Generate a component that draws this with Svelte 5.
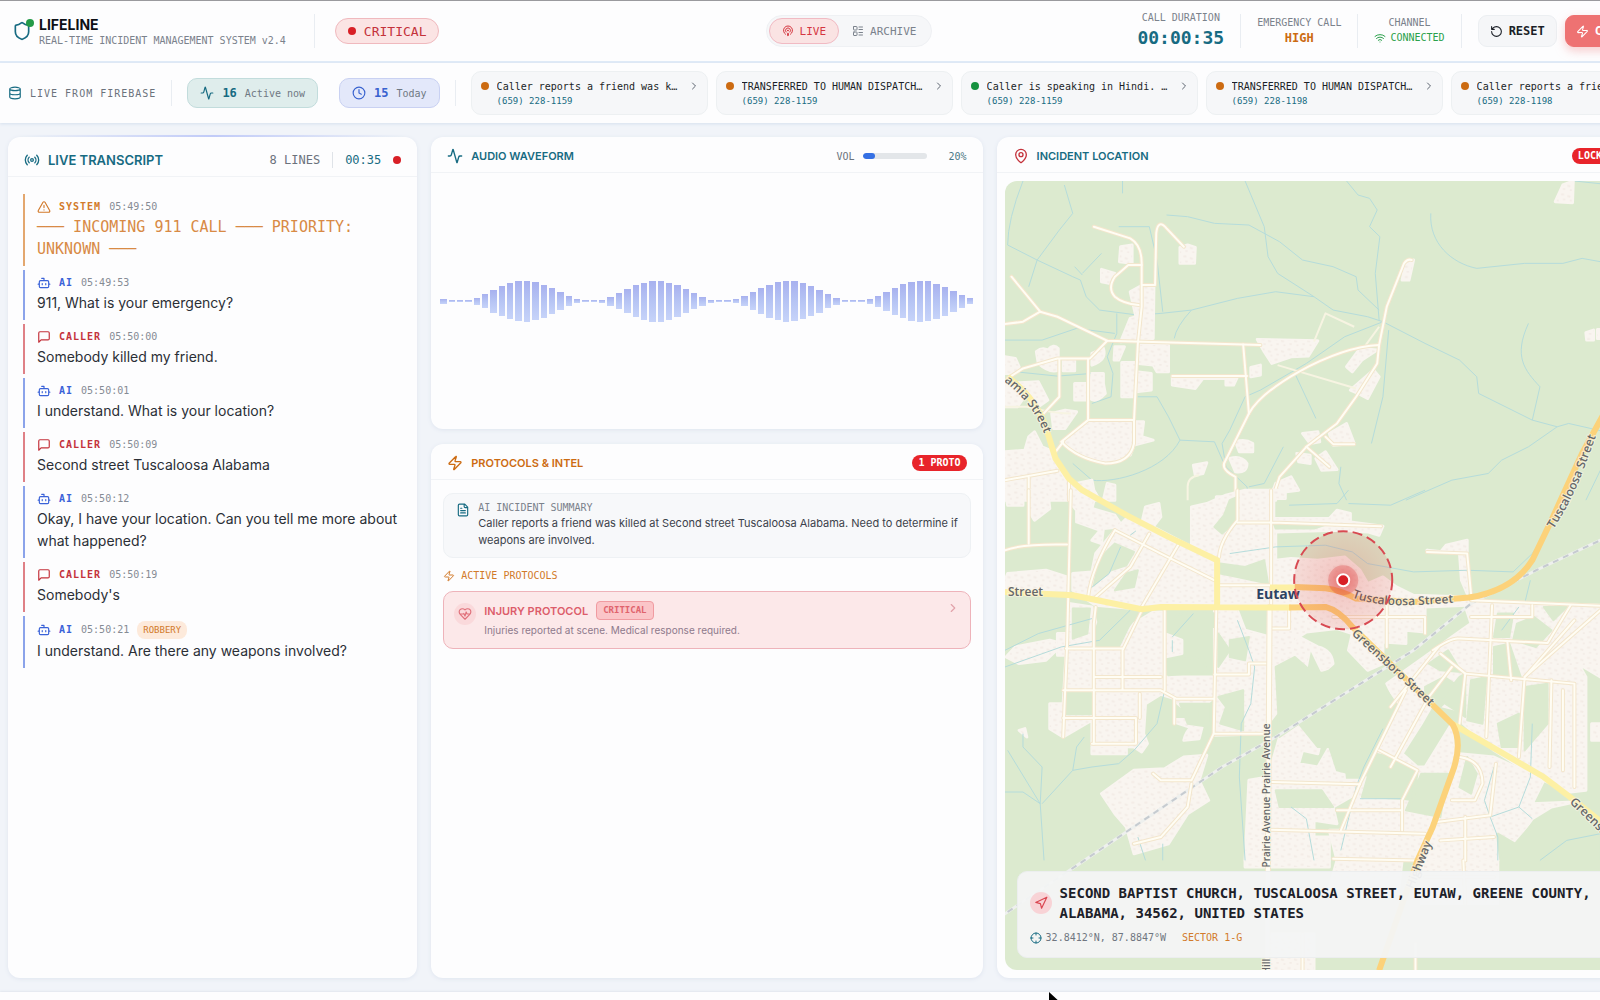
<script lang="ts">
  type Speaker = 'system' | 'ai' | 'caller';

  interface Line {
    speaker: Speaker;
    time: string;
    text: string;
    tag?: string;
  }

  const icons: Record<string, string> = {
    shield:
      'M20 13c0 5-3.5 7.5-7.66 8.95a1 1 0 0 1-.67-.01C7.5 20.5 4 18 4 13V6a1 1 0 0 1 1-1c2 0 4.5-1.2 6.24-2.72a1.17 1.17 0 0 1 1.52 0C14.51 3.81 17 5 19 5a1 1 0 0 1 1 1z',
    database:
      'M3 5a9 3 0 1 0 18 0a9 3 0 1 0-18 0M3 5v14a9 3 0 0 0 18 0V5M3 12a9 3 0 0 0 18 0',
    activity:
      'M22 12h-2.48a2 2 0 0 0-1.93 1.46l-2.35 8.36a.25.25 0 0 1-.48 0L9.24 2.18a.25.25 0 0 0-.48 0l-2.35 8.36A2 2 0 0 1 4.49 12H2',
    clock: 'M2 12a10 10 0 1 0 20 0a10 10 0 1 0-20 0M12 6v6l4 2',
    podcast:
      'M16.85 18.58a9 9 0 1 0-9.7 0M8 14a5 5 0 1 1 8 0M11 11a1 1 0 1 0 2 0a1 1 0 1 0-2 0M13 17a1 1 0 1 0-2 0l.5 4.5a.5.5 0 1 0 1 0Z',
    list: 'M4 3h5a1 1 0 0 1 1 1v5a1 1 0 0 1-1 1H4a1 1 0 0 1-1-1V4a1 1 0 0 1 1-1zM4 14h5a1 1 0 0 1 1 1v5a1 1 0 0 1-1 1H4a1 1 0 0 1-1-1v-5a1 1 0 0 1 1-1zM14 4h7M14 9h7M14 15h7M14 20h7',
    wifi: 'M12 20h.01M2 8.82a15 15 0 0 1 20 0M5 12.86a10 10 0 0 1 14 0M8.5 16.43a5 5 0 0 1 7 0',
    reset: 'M3 12a9 9 0 1 0 9-9 9.75 9.75 0 0 0-6.74 2.74L3 8M3 3v5h5',
    zap: 'M4 14a1 1 0 0 1-.78-1.63l9.9-10.2a.5.5 0 0 1 .86.46l-1.92 6.02A1 1 0 0 0 13 10h7a1 1 0 0 1 .78 1.63l-9.9 10.2a.5.5 0 0 1-.86-.46l1.92-6.02A1 1 0 0 0 11 14z',
    radio:
      'M4.9 19.1C1 15.2 1 8.8 4.9 4.9M7.8 16.2c-2.3-2.3-2.3-6.1 0-8.5M10 12a2 2 0 1 0 4 0a2 2 0 1 0-4 0M16.2 7.8c2.3 2.3 2.3 6.1 0 8.5M19.1 4.9C23 8.8 23 15.1 19.1 19',
    system:
      'm21.73 18-8-14a2 2 0 0 0-3.48 0l-8 14A2 2 0 0 0 4 21h16a2 2 0 0 0 1.73-3M12 9v4M12 17h.01',
    ai: 'M12 8V4H8M6 8h12a2 2 0 0 1 2 2v8a2 2 0 0 1-2 2H6a2 2 0 0 1-2-2v-8a2 2 0 0 1 2-2zM2 14h2M20 14h2M15 13v2M9 13v2',
    caller: 'M21 15a2 2 0 0 1-2 2H7l-4 4V5a2 2 0 0 1 2-2h14a2 2 0 0 1 2 2z',
    file: 'M15 2H6a2 2 0 0 0-2 2v16a2 2 0 0 0 2 2h12a2 2 0 0 0 2-2V7ZM14 2v4a2 2 0 0 0 2 2h4M10 9H8M16 13H8M16 17H8',
    heart:
      'M19 14c1.49-1.46 3-3.21 3-5.5A5.5 5.5 0 0 0 16.5 3c-1.76 0-3 .5-4.5 2-1.5-1.5-2.74-2-4.5-2A5.5 5.5 0 0 0 2 8.5c0 2.3 1.5 4.05 3 5.5l7 7ZM3.22 12H9.5l.5-1 2 4.5 2-7 1.5 3.5h5.27',
    pin: 'M20 10c0 4.993-5.539 10.193-7.399 11.799a1 1 0 0 1-1.202 0C9.539 20.193 4 14.993 4 10a8 8 0 0 1 16 0M9 10a3 3 0 1 0 6 0a3 3 0 1 0-6 0',
    navigation: 'M3 11 22 2 13 21 11 13Z',
    crosshair: 'M2 12a10 10 0 1 0 20 0a10 10 0 1 0-20 0M22 12h-4M6 12H2M12 6V2M12 22v-4',
    chevron: 'm9 18 6-6-6-6',
  };

  const recentCalls = [
    { title: 'Caller reports a friend was killed', phone: '(659) 228-1159', status: 'pending' },
    { title: 'TRANSFERRED TO HUMAN DISPATCHER', phone: '(659) 228-1159', status: 'pending' },
    { title: 'Caller is speaking in Hindi. Needs translator', phone: '(659) 228-1159', status: 'done' },
    { title: 'TRANSFERRED TO HUMAN DISPATCHER', phone: '(659) 228-1198', status: 'pending' },
    { title: 'Caller reports a friend was killed', phone: '(659) 228-1198', status: 'pending' },
  ];

  const lines: Line[] = [
    { speaker: 'system', time: '05:49:50', text: '─── INCOMING 911 CALL ─── PRIORITY: UNKNOWN ───' },
    { speaker: 'ai', time: '05:49:53', text: '911, What is your emergency?' },
    { speaker: 'caller', time: '05:50:00', text: 'Somebody killed my friend.' },
    { speaker: 'ai', time: '05:50:01', text: 'I understand. What is your location?' },
    { speaker: 'caller', time: '05:50:09', text: 'Second street Tuscaloosa Alabama' },
    {
      speaker: 'ai',
      time: '05:50:12',
      text: 'Okay, I have your location. Can you tell me more about what happened?',
    },
    { speaker: 'caller', time: '05:50:19', text: "Somebody's" },
    { speaker: 'ai', time: '05:50:21', text: 'I understand. Are there any weapons involved?', tag: 'ROBBERY' },
  ];

  let view = $state<'live' | 'archive'>('live');
  let volume = $state(20);

  const bars = Array.from({ length: 64 }, (_, i) =>
    Math.max(2, Math.round(20.5 * (1 + Math.cos((2 * Math.PI * (i - 9.7)) / 15.8))))
  );

  // map layers, split in a north and a south tile
  const northWater = [
    'M60 153Q20 270 20 345L97 390L190 440L210 450M97 390L155 300L190 250L168 165M97 390L75 470M320 153V190',
    'M640 153L690 290L700 380L725 430L820 500L870 540L960 560L1000 575',
    'M435 255L490 260L560 280L650 285L730 335L790 390L870 410L930 440L935 480L990 540',
    'M905 153L935 195L965 205L985 240L965 290L992 320L980 430L990 570',
    'M210 450L225 500L260 540L360 555L420 550L500 540L620 505L720 485L820 500',
    'M310 290H390L410 390L425 545M265 370L215 430M195 410L215 435M500 540Q460 590 455 625',
    'M13 630H110L200 595L300 610M305 550V610L280 680L295 730L290 800L240 820M40 725L150 738L240 730',
    'M1000 575L900 620L800 700L680 780L640 800L600 900L580 940L590 1010L645 1070L650 1110',
    'M1000 575L1110 640L1200 690L1245 740L1250 790L1390 870L1455 890L1485 880L1600 910',
    'M1455 890L1380 950L1310 990L1275 1030L1180 1050L1060 1110',
    'M1125 250C1120 340 1180 400 1245 415L1370 400L1470 400L1520 385L1640 410M1500 153L1640 170',
    'M1380 580C1340 680 1370 720 1410 770L1390 870M1015 600L1000 800L970 940M770 730L825 865',
    'M360 800H410L440 860L470 930L560 935L585 1000M470 930C430 1020 300 1060 240 1050L190 1000',
    'M890 1010L885 1060L905 1110M740 950L690 1060L650 1070M1568 1020L1530 1110',
  ];

  const northBlocks = [
    'M372 465H402L400 625L315 635L340 565L355 560L345 510L340 485Z',
    'M672 628L830 632L805 678L760 680L710 700L690 665Z',
    'M362 645H440V725H410L400 705L362 700Z',
    'M318 697H355V725L395 730V780L355 785L350 800H318Z',
    'M13 965L65 960L75 920L90 905L110 950L130 960L150 1015L170 1050L200 1060L240 1050L245 1080L260 1110H13Z',
    'M165 935L235 875H375L370 920L400 930L350 945L340 975L280 995L220 980Z',
    'M450 740H620L610 765H590V745H530L510 775L450 765Z',
    'M13 760L100 755L125 810L100 830L70 790L45 830H13ZM13 680L40 685L50 710L40 730L13 730Z',
    'M315 350L345 345V400L312 395ZM470 352L490 345L510 352L508 400L470 400ZM265 418L300 430L285 460L265 455Z',
    'M1450 215L1470 165L1497 153L1495 218Z',
    'M95 665Q110 650 125 660Q140 640 152 655V720Q130 730 100 700ZM165 690H195V722H165Z',
    'M240 670L270 655Q280 690 240 705ZM240 730H270V760L275 790Q250 820 235 805ZM195 760H225V810H195Z',
    'M615 935Q640 925 660 940V965H625ZM600 985Q630 975 645 1000Q645 1030 615 1025ZM505 1005L540 998L530 1030L510 1035Z',
    'M775 970L810 975V1000L780 995ZM825 985L850 965L880 1018L840 1020ZM790 910L830 905L835 935L810 940Z',
    'M860 910L905 880L925 940L870 945ZM720 1060L760 1040L780 1080L710 1090ZM905 710L940 655L985 660L945 690L920 725Z',
    'M915 780L975 720L990 740L960 805L935 790ZM1060 395L1080 390L1068 450H1050ZM655 712L680 705V735L655 740Z',
    'M1530 608L1550 600V630H1532ZM1560 598H1590V625H1560ZM565 1100H610V1110H565ZM670 1095L720 1085V1110H670Z',
    'M280 1060L300 1065V1110H270ZM300 650H325L310 690H298ZM135 850L170 840L200 845L170 895H140Z',
  ];

  const northRoads = [
    'M245 290L340 325Q370 345 370 400V530L360 640L350 870M405 465L408 310Q412 265 435 295L480 350M370 465H405',
    'M370 405H335L300 440Q280 475 300 500Q320 520 362 525M30 440L105 545L60 575L13 582M105 545L150 560L280 632L635 643L680 645',
    'M280 632L235 685H150L60 715L20 745M155 685V800L110 855M230 685V870H350V940Q340 1000 275 1000Q200 985 160 935L230 870',
    'M635 643L650 850L585 1000Q580 1020 615 1040V1110M450 738H645',
    'M650 850Q680 790 780 725Q900 650 990 645L985 700L930 800L880 880L800 950L730 1040L710 1110',
    'M990 645L1010 530L1055 400Q1065 385 1075 390M800 950L860 1010M850 920L870 942H925',
    'M13 1050L150 1022M75 1040V1110M180 1050V1110M145 965L165 935',
  ];

  const northLanes = [
    'M820 635L850 550L925 590M725 705L930 775M990 590L955 645M490 1110V1070Q490 1040 520 1035M13 830H70L110 840Q150 850 185 850',
  ];

  const southBlocks = [
    'M13 0H60V45H20ZM75 0H125L130 55L90 90L75 60ZM205 15L250 10L240 55L300 75L320 110L270 115L265 160L240 150L262 120L200 95L200 60L185 40Z',
    'M20 250L120 240L175 260V300H13V270ZM190 300V250L240 245L250 190L300 120L330 85L370 100L380 50L415 40L420 80L400 110L500 170L500 50L540 40L590 15L640 0H705V350L420 350L370 357L250 345Z',
    'M705 0H745V25H715V85H860L880 60L915 70V95L1000 108L990 135L960 125L880 120L720 125V210L760 205L830 210L900 200L940 240L960 280L1000 260L1035 290L1080 315L1220 320V345L1110 350V425L1060 420L1060 460L1000 455L1000 520L960 540L910 480L920 430L880 415L800 425L780 440L770 470L700 460Z',
    'M180 340L240 350L250 395L240 430L245 480L300 470L350 400L400 365H430V430L475 450V490L430 500V560H560V360H620L640 420L705 440V730L560 735V620L530 650L520 720L455 695V625L420 612L380 640L375 730L385 760L370 785L350 770L240 765V690L165 740L130 715V640H165Z',
    'M710 470H760L780 440L830 470Q870 480 870 530L840 540L810 470L800 530L750 560V600L740 640L700 700Z',
    'M16 500L40 470L130 450L165 460L120 510L50 520Z',
    'M265 910L350 840L430 835L480 800L540 795L520 870L545 930L490 970L440 1060L350 1090L330 1010L300 970Z',
    'M730 740L810 690L840 740L830 790L790 780L780 820L830 830L860 770L895 810L900 870H940L945 900L870 950L880 1000L820 990L820 1040H860V1110H640L650 870L700 860Z',
    'M1115 180L1150 186L1165 165L1220 150V310L1205 270L1200 190ZM1210 330L1568 345V560L1510 520L1530 560V900L1490 905L1400 860L1290 780L1210 700L1200 660L1130 640L1100 700L1050 790L1090 830L1110 830L1180 700L1190 850L1140 1010L1110 1030L1050 1020H890L940 880L1000 760L1040 650L1010 580L1120 490L1180 440L1230 400Z',
    'M1200 790L1290 800L1420 870L1390 940L1500 935L1440 950L1390 985L1345 1060L1290 1020L1300 1110H1100L1140 990L1180 880Z',
    'M1545 700H1640V750H1545ZM180 430H150V495H240V500Z',
    'M860 1020H1110L1090 1110H880ZM240 770H330V790H240ZM480 750Q490 700 530 700L520 745ZM50 720L65 715L70 740Z',
    'M880 1110H1050L1040 1210L860 1190ZM1100 1110H1300V1240H1100ZM640 1110H860V1130H640ZM700 1330H820V1440H700Z',
  ];

  // clearings that sit inside the built-up blocks
  const southParks = [
    'M170 608H238V672H170ZM255 410L300 380L340 400L310 470H255ZM435 510L530 500L540 545L440 555ZM520 360L560 370V410L450 410L460 375Z',
    'M600 30L620 20V90L580 130L560 110L585 75ZM715 100H860L820 115H720ZM575 220L640 230L690 210L700 280L620 260L575 250Z',
    'M720 530L770 500L830 560L860 540L900 500L960 560L1010 600L1040 650L950 860L880 840L860 770L830 770L780 700L730 740Z',
    'M1110 590L1160 560L1200 590L1150 650L1110 640ZM1290 470L1330 460L1360 560H1290ZM1230 570L1270 560L1260 700L1220 690ZM1370 590L1430 580L1430 700L1370 780Z',
    'M940 780L1020 800L1090 850L1080 930L1050 925L945 920L960 860ZM1100 850L1170 850L1150 980L1060 960ZM1300 370H1340L1330 440L1290 440Z',
    'M720 900H840L870 950H730ZM600 450L650 440L640 510L600 500ZM470 640H550V710L490 700Z',
    'M260 205L300 160L350 185L330 225L290 240L245 285ZM190 355H235L228 430L190 445ZM570 620L635 600V720L575 700L590 650Z',
    'M570 430L600 480L570 530ZM1120 520L1170 480L1205 545L1150 540ZM1200 560L1215 550V680L1150 630ZM1300 700L1355 670V770L1310 770Z',
    'M1390 1000H1568V1110H1310L1300 1030L1345 1060ZM330 250L360 240L350 290L300 300ZM455 640L475 660L520 660V680L455 680Z',
    'M1445 390L1480 350H1420ZM1440 420L1400 470L1340 450L1350 400L1395 380ZM1220 800L1245 850L1230 910L1200 890Z',
  ];

  const southWater = [
    'M315 170L285 250L230 300M340 135L355 122M755 45L880 40L910 0M910 40L1020 45L1110 0M600 190L720 170L850 165L920 185L960 220L1080 245L1220 240L1340 245L1390 190L1500 0',
    'M340 360L260 450L160 470L13 530M13 480L100 430L240 385M450 450V485M430 430V495M505 370L450 440',
    'M620 390L650 480L665 530L655 640L630 700L625 860L640 1110M760 950L800 985L820 1110M1000 715L950 830L930 890L890 1080',
    'M60 730V770L110 830L105 940L20 780M105 940L60 905H13M105 940L115 1110M190 840L200 770L220 740M110 940L190 840L240 830L310 820L350 780L410 700L430 600',
    'M1355 350L1310 420M1390 700L1385 860L1355 950L1280 980L1265 930L1290 830M1355 950L1390 985M1280 980L1300 1040V1110M940 925H1050',
    'M360 1040L380 1110M425 1060V1110M1568 1030L1480 1050L1410 1110M1385 270L1370 340',
  ];

  const southRoads = [
    'M185 0L175 470L165 740M75 0V160M13 180Q60 160 175 163M300 120Q240 230 230 320M620 0V90Q575 150 572 200',
    'M620 97H710L995 108M708 0V350M570 285H705M300 120L420 190L560 270M465 165L370 350M390 130L340 230L250 320',
    'M250 350L245 400V760M172 475H320M320 600V480L375 350M245 560H420M165 600H420L460 625H560M430 360V600M565 350L558 730',
    'M165 683H355V760H240M365 610V683M455 625V700M558 730H690M558 730L500 870H420L400 850M500 880L490 950L420 1040L350 1060',
    'M560 553H650V520H700M755 350V415H705M870 380H1110V430M1010 330V470M1220 190L1230 310M1115 185L1220 190M1230 330L1640 350',
    'M1285 345L1270 740M1215 550L1500 580V890M1130 480Q1180 440 1200 445L1430 458M1430 458L1490 345M1568 360L1370 560L1355 800',
    'M1440 570L1435 830M1325 455L1335 570M1150 490L1215 550L1200 700M1145 470L1020 650M1060 600L940 880L890 1020',
    'M1180 530L1120 620L1020 830M990 780L1090 840L1050 930V1020M710 875L940 882M700 1018L1110 1030M880 960H1050',
    'M1200 800Q1260 810 1260 880L1240 930H1180M1140 995L1280 975L1295 820M1215 980V1110M1150 1050L1290 1040M870 1105L1090 1110',
    'M1110 1160H1290M1210 1110L1215 1240M1085 1360V1440M790 1330V1440M1370 560L1500 390M1470 600V840M1230 380H1390V345',
  ];

  const railway = 'M1640 110L1568 150L1400 240L1230 340L1080 480L720 740L580 830L220 1110L0 1280';
</script>

{#snippet icon(name: string, size: number)}
  <svg class="icon" width={size} height={size} viewBox="0 0 24 24" aria-hidden="true">
    <path d={icons[name]} />
  </svg>
{/snippet}

<div class="viewport">
  <div class="page">
    <header class="topbar">
      <div class="brand-side">
        <div class="logo">
          {@render icon('shield', 20)}
          <span class="logo-dot"></span>
        </div>
        <div class="brand">
          <h1>LIFELINE</h1>
          <p>REAL-TIME INCIDENT MANAGEMENT SYSTEM v2.4</p>
        </div>
        <span class="divider tall"></span>
        <span class="priority"><span class="dot red"></span>CRITICAL</span>
      </div>

      <nav class="toggle">
        <button class:active={view === 'live'} onclick={() => (view = 'live')}>
          {@render icon('podcast', 12)}LIVE
        </button>
        <button class:active={view === 'archive'} onclick={() => (view = 'archive')}>
          {@render icon('list', 12)}ARCHIVE
        </button>
      </nav>

      <div class="stats">
        <div class="stat">
          <span class="label">CALL DURATION</span>
          <span class="duration">00:00:35</span>
        </div>
        <span class="divider tall"></span>
        <div class="stat">
          <span class="label">EMERGENCY CALL</span>
          <span class="level">HIGH</span>
        </div>
        <span class="divider tall"></span>
        <div class="stat">
          <span class="label">CHANNEL</span>
          <span class="channel">{@render icon('wifi', 12)}CONNECTED</span>
        </div>
        <span class="divider tall"></span>
        <div class="actions">
          <button class="btn">{@render icon('reset', 13)}RESET</button>
          <button class="btn danger">{@render icon('zap', 13)}CALL ENDED</button>
        </div>
      </div>
    </header>

    <section class="strip">
      <span class="source">{@render icon('database', 14)}LIVE FROM FIREBASE</span>
      <span class="divider"></span>
      <div class="counters">
        <span class="counter teal">{@render icon('activity', 14)}<b>16</b><small>Active now</small></span>
        <span class="counter blue">{@render icon('clock', 14)}<b>15</b><small>Today</small></span>
      </div>
      <span class="divider"></span>
      <div class="calls">
        {#each recentCalls as call}
          <button class="call">
            <span class="dot {call.status}"></span>
            <span class="call-title">{call.title}</span>
            {@render icon('chevron', 12)}
            <span class="call-phone">{call.phone}</span>
          </button>
        {/each}
      </div>
    </section>

    <main>
      <section class="panel transcript">
        <div class="panel-head">
          {@render icon('radio', 16)}
          <h2>LIVE TRANSCRIPT</h2>
          <div class="transcript-meta">
            <span>8 LINES</span>
            <span class="divider short"></span>
            <span class="elapsed">00:35</span>
            <span class="dot red"></span>
          </div>
        </div>
        <div class="lines">
          {#each lines as line}
            <article class="line {line.speaker}">
              <div class="line-meta">
                {@render icon(line.speaker, 14)}
                <strong>{line.speaker.toUpperCase()}</strong>
                <time>{line.time}</time>
                {#if line.tag}
                  <span class="tag">{line.tag}</span>
                {/if}
              </div>
              <p>{line.text}</p>
            </article>
          {/each}
        </div>
      </section>

      <div class="middle">
        <section class="panel audio">
          <div class="panel-head">
            {@render icon('activity', 16)}
            <h2>AUDIO WAVEFORM</h2>
            <div class="volume">
              <span id="volume-label">VOL</span>
              <div
                class="meter"
                role="meter"
                aria-labelledby="volume-label"
                aria-valuemin="0"
                aria-valuemax="100"
                aria-valuenow={volume}
              >
                <div class="meter-fill" style="width: {volume}%"></div>
              </div>
              <span class="percent">{volume}%</span>
            </div>
          </div>
          <div class="wave">
            {#each bars as height}
              <span style="height: {height}px"></span>
            {/each}
          </div>
        </section>

        <section class="panel protocols">
          <div class="panel-head">
            {@render icon('zap', 16)}
            <h2>PROTOCOLS &amp; INTEL</h2>
            <span class="pill">1 PROTO</span>
          </div>
          <div class="protocols-body">
            <div class="summary">
              {@render icon('file', 14)}
              <div>
                <h3>AI INCIDENT SUMMARY</h3>
                <p>
                  Caller reports a friend was killed at Second street Tuscaloosa Alabama. Need to determine if
                  weapons are involved.
                </p>
              </div>
            </div>
            <h3 class="active-title">{@render icon('zap', 12)}ACTIVE PROTOCOLS</h3>
            <button class="protocol">
              <span class="round">{@render icon('heart', 14)}</span>
              <span class="protocol-text">
                <span class="protocol-name">INJURY PROTOCOL <em>CRITICAL</em></span>
                <span class="protocol-note">Injuries reported at scene. Medical response required.</span>
              </span>
              {@render icon('chevron', 14)}
            </button>
          </div>
        </section>
      </div>

      <section class="panel location">
        <div class="panel-head">
          {@render icon('pin', 16)}
          <h2>INCIDENT LOCATION</h2>
          <span class="pill">LOCKED</span>
        </div>
        <div class="map">
          <svg class="tiles" viewBox="1005 181 623 789" preserveAspectRatio="xMinYMin slice">
            <defs>
              <pattern id="lots" width="34" height="31" patternUnits="userSpaceOnUse">
                <path class="lot" d="M3 4h8v6h-8zM20 9l8 2-1 6-8-2zM8 20h6v5h-6zM26 23h5v5h-5z" />
              </pattern>
              <radialGradient id="heat">
                <stop offset="0" stop-color="#dc2626" stop-opacity="0.5" />
                <stop offset="0.35" stop-color="#dc2626" stop-opacity="0.2" />
                <stop offset="1" stop-color="#dc2626" stop-opacity="0.12" />
              </radialGradient>
              <path id="mesopotamia" d="M1004 381Q1034 404 1045 436" />
              <path id="tuscaloosa-north" d="M1553 529Q1572 500 1583 470T1602 420" />
              <path id="tuscaloosa" d="M1352 597Q1372 605 1400 605T1470 601" />
              <path id="greensboro" d="M1351 634L1440 716" />
              <path id="greensboro-east" d="M1569 802L1620 852" />
              <path id="highway" d="M1413 889L1443 814" />
            </defs>

            <g transform="translate(1000 130) scale(0.3827 0.3333)">
              {#each northWater as d}<path class="water" {d} />{/each}
              {#each northBlocks as d}<path class="block" {d} /><path fill="url(#lots)" {d} />{/each}
              {#each northLanes as d}<path class="lane" {d} />{/each}
              {#each northRoads as d}<path class="road-edge" {d} />{/each}
              {#each northRoads as d}<path class="road" {d} />{/each}
            </g>
            <g transform="translate(1000 490) scale(0.3827 0.3333)">
              {#each southBlocks as d}<path class="block" {d} /><path fill="url(#lots)" {d} />{/each}
              {#each southParks as d}<path class="park" {d} />{/each}
              {#each southWater as d}<path class="water" {d} />{/each}
              <path class="rail" d={railway} />
              <path class="rail ties" d={railway} />
              {#each southRoads as d}<path class="road-edge" {d} />{/each}
              {#each southRoads as d}<path class="road" {d} />{/each}
              <path class="road-edge avenue" d="M704 350L698 1440" />
              <path class="road avenue" d="M704 350L698 1440" />
              <path
                class="main"
                d="M20 -340Q100 -270 122 -180L145 -95L180 -35L215 0L330 75L440 140L567 210V350M13 305L190 315L370 357L420 350L760 352M705 292H775M1180 700L1300 780L1420 860L1500 930L1640 1060"
              />
              <path
                class="trunk"
                d="M770 290L850 294Q890 300 930 325L1080 335L1225 322Q1340 300 1390 210L1440 90L1480 -10L1520 -110L1620 -320M755 352L850 350Q885 360 920 410L1182 702Q1210 760 1180 850L1130 1010L1090 1110L990 1440"
              />
            </g>

            <g class="street-names">
              <text><textPath href="#mesopotamia">amia Street</textPath></text>
              <text><textPath href="#tuscaloosa-north">Tuscaloosa Street</textPath></text>
              <text><textPath href="#tuscaloosa">Tuscaloosa Street</textPath></text>
              <text><textPath href="#greensboro">Greensboro Street</textPath></text>
              <text><textPath href="#greensboro-east">Greensboro Street</textPath></text>
              <text><textPath href="#highway">Highway</textPath></text>
              <text x="1008" y="596">Street</text>
              <text class="small" transform="translate(1270 867) rotate(-90)">Prairie Avenue Prairie Avenue</text>
              <text class="small" transform="translate(1270 974) rotate(-90)">Hill</text>
            </g>
            <text class="town" x="1256" y="599">Eutaw</text>

            <circle cx="1343" cy="580" r="49" fill="url(#heat)" />
            <circle class="zone" cx="1343" cy="580" r="49" />
            <circle class="pulse" cx="1343" cy="580" r="15" />
            <circle class="spot" cx="1343" cy="580" r="6" />
          </svg>

          <address>
            <div class="address-row">
              <span class="round">{@render icon('navigation', 14)}</span>
              <strong>SECOND BAPTIST CHURCH, TUSCALOOSA STREET, EUTAW, GREENE COUNTY, ALABAMA, 34562, UNITED STATES</strong>
            </div>
            <div class="coords">
              {@render icon('crosshair', 12)}
              <span>32.8412°N, 87.8847°W</span>
              <span class="sector">SECTOR 1-G</span>
            </div>
          </address>
        </div>
      </section>
    </main>

    <footer></footer>
  </div>

  <svg class="cursor" width="16" height="22" viewBox="0 0 16 22" aria-hidden="true">
    <path d="M1 1v17l4-4 3 7 3-1-3-7h6z" />
  </svg>
</div>

<style>
  :global(body) {
    margin: 0;
  }

  .viewport {
    --mono: 'DejaVu Sans Mono', 'Liberation Mono', monospace;
    --sans: Inter, 'Liberation Sans', sans-serif;
    --teal: #176b82;
    --orange: #cc6b12;
    --muted: #7b828c;
    --line: #e9edf2;
    position: relative;
    height: 100vh;
    overflow: hidden;
    background: #f1f4f9;
    font-family: var(--sans);
    color: #1b1f27;
  }

  /* the console is laid out wider than the window and runs off its right edge */
  .page {
    box-sizing: border-box;
    width: calc(100% + 98px);
    height: 100%;
    display: flex;
    flex-direction: column;
    border-top: 1px solid #9a9a9e;
  }

  h1,
  h2,
  h3,
  p {
    margin: 0;
  }

  button {
    font-family: inherit;
    color: inherit;
    cursor: pointer;
  }

  .icon {
    flex-shrink: 0;
    fill: none;
    stroke: currentColor;
    stroke-width: 2;
    stroke-linecap: round;
    stroke-linejoin: round;
  }

  .dot {
    flex-shrink: 0;
    width: 8px;
    height: 8px;
    border-radius: 50%;
    background: #cc6b12;
  }

  .dot.red {
    background: #d81f26;
  }

  .dot.done {
    background: #16923f;
  }

  .divider {
    flex-shrink: 0;
    width: 1px;
    height: 26px;
    background: var(--line);
  }

  .divider.tall {
    height: 34px;
  }

  .divider.short {
    height: 16px;
    background: #dfe3e8;
  }

  .topbar {
    display: grid;
    grid-template-columns: 1fr auto 1fr;
    align-items: center;
    height: 60px;
    padding: 0 12px;
    background: #fdfdfe;
    border-bottom: 2px solid #e0eaf7;
    font-family: var(--mono);
  }

  .brand-side {
    display: flex;
    align-items: center;
  }

  .logo {
    position: relative;
    display: flex;
    color: var(--teal);
  }

  .logo-dot {
    position: absolute;
    top: -2px;
    right: -2px;
    width: 8px;
    height: 8px;
    border-radius: 50%;
    background: #249a48;
  }

  .brand {
    margin: 2px 28px 0 7px;
  }

  .brand h1 {
    font-family: var(--sans);
    font-size: 14px;
    line-height: 18px;
    font-weight: 700;
    color: #0e1116;
  }

  .brand p {
    font-size: 10px;
    line-height: 14px;
    color: var(--muted);
  }

  .priority {
    display: flex;
    align-items: center;
    gap: 8px;
    height: 24px;
    margin-left: 20px;
    padding: 0 12px;
    border: 1px solid #f0b9be;
    border-radius: 13px;
    background: #fbe4e4;
    color: #c4323b;
    font-size: 13px;
  }

  .toggle {
    display: flex;
    padding: 2px;
    border: 1px solid #eff1f4;
    border-radius: 16px;
    background: #f6f7f9;
  }

  .toggle button {
    display: flex;
    align-items: center;
    gap: 6px;
    height: 26px;
    padding: 0 12px;
    border: 1px solid transparent;
    border-radius: 13px;
    background: none;
    color: var(--muted);
    font-size: 11px;
  }

  .toggle button.active {
    border-color: #f1bac3;
    background: #fae3e3;
    color: #d5363f;
  }

  .stats {
    display: flex;
    align-items: center;
    justify-content: flex-end;
    gap: 16px;
  }

  .stat {
    display: flex;
    flex-direction: column;
    align-items: center;
    gap: 1px;
  }

  .label {
    font-size: 10px;
    line-height: 12px;
    color: var(--muted);
  }

  .duration {
    font-size: 18px;
    line-height: 26px;
    font-weight: 700;
    color: var(--teal);
  }

  .level {
    font-size: 12px;
    line-height: 16px;
    font-weight: 700;
    color: var(--orange);
  }

  .channel {
    display: flex;
    align-items: center;
    gap: 4px;
    font-size: 10px;
    line-height: 16px;
    color: #2ba14c;
  }

  .actions {
    display: flex;
    gap: 8px;
  }

  .btn {
    display: flex;
    align-items: center;
    gap: 6px;
    height: 32px;
    padding: 0 11px;
    border: 1px solid #eceff2;
    border-radius: 9px;
    background: #f5f6f8;
    font-size: 12px;
    font-weight: 700;
    white-space: nowrap;
  }

  .btn.danger {
    padding: 0 18px 0 10px;
    border-color: #ee7272;
    background: #ee7272;
    color: #fff;
    box-shadow: 0 4px 10px #f3a4a488;
  }

  .strip {
    display: flex;
    align-items: center;
    gap: 15px;
    height: 60px;
    padding: 0 8px;
    background: #fdfdfe;
    box-shadow: 0 1px 3px #d5e0ee;
    font-family: var(--mono);
  }

  .source {
    display: flex;
    align-items: center;
    gap: 8px;
    font-size: 10px;
    letter-spacing: 1px;
    white-space: nowrap;
    color: #6b727c;
  }

  .source .icon {
    color: var(--teal);
  }

  .counters {
    display: flex;
    gap: 21px;
  }

  .counter {
    display: flex;
    align-items: center;
    gap: 8px;
    height: 28px;
    padding: 0 12px;
    border: 1px solid;
    border-radius: 10px;
    white-space: nowrap;
  }

  .counter b {
    font-size: 12px;
  }

  .counter small {
    font-size: 10px;
    color: #6f7883;
  }

  .counter.teal {
    border-color: #c2dcdc;
    background: #dfedec;
    color: var(--teal);
  }

  .counter.blue {
    border-color: #c9d1f2;
    background: #e3e8fa;
    color: #3862cf;
  }

  .calls {
    display: flex;
    gap: 8px;
  }

  .call {
    box-sizing: border-box;
    display: grid;
    grid-template-columns: 8px 1fr 12px;
    align-content: center;
    align-items: center;
    column-gap: 8px;
    width: 237px;
    height: 44px;
    padding: 0 7px 0 9px;
    border: 1px solid #edf0f2;
    border-radius: 10px;
    background: #f6f7f9;
    text-align: left;
    font-size: 10px;
    line-height: 15px;
  }

  .call .icon {
    color: #5c6470;
  }

  .call-title {
    overflow: hidden;
    text-overflow: ellipsis;
    white-space: nowrap;
  }

  .call-phone {
    grid-column: 2;
    font-size: 9px;
    line-height: 14px;
    color: var(--teal);
  }

  main {
    flex: 1;
    min-height: 0;
    display: grid;
    grid-template-columns: 409fr 551fr 639fr;
    gap: 14px;
    padding: 14px 62px 14px 8px;
  }

  .panel {
    display: flex;
    flex-direction: column;
    min-width: 0;
    min-height: 0;
    border-radius: 12px;
    background: #fdfdfe;
    box-shadow: 0 1px 4px #dfe5ef;
  }

  .panel-head {
    box-sizing: border-box;
    display: flex;
    align-items: center;
    gap: 8px;
    height: 36px;
    padding: 3px 16px 0;
    border-bottom: 1px solid #f1f3f6;
    color: var(--teal);
  }

  .panel-head h2 {
    font-size: 11px;
    line-height: 16px;
    font-weight: 600;
  }

  .transcript::before {
    content: '';
    height: 2px;
    margin: -2px 12px 0;
    background: linear-gradient(90deg, transparent, #c1cbf8, transparent);
  }

  .transcript .panel-head {
    height: 40px;
    padding-top: 6px;
  }

  .transcript .panel-head h2 {
    font-size: 13px;
  }

  .transcript-meta {
    display: flex;
    align-items: center;
    gap: 12px;
    margin-left: auto;
    font-family: var(--mono);
    font-size: 12px;
    color: #6b727c;
  }

  .elapsed {
    color: var(--teal);
  }

  .lines {
    display: flex;
    flex-direction: column;
    gap: 4px;
    padding: 17px 16px 16px 15px;
  }

  .line {
    padding: 5px 0 6px 12px;
    border-left: 2px solid #8ba3ea;
  }

  .line.system {
    border-color: #e3a76f;
  }

  .line.caller {
    border-color: #df8086;
  }

  .line-meta {
    display: flex;
    align-items: center;
    gap: 8px;
    min-height: 16px;
    margin-bottom: 1px;
    font-family: var(--mono);
    font-size: 10px;
    line-height: 14px;
    color: #3a62d8;
  }

  .line.system .line-meta {
    color: #d27a2a;
  }

  .line.caller .line-meta {
    color: #c4323b;
  }

  .line-meta strong {
    letter-spacing: 1px;
  }

  .line-meta time {
    color: #858b94;
  }

  .tag {
    padding: 2px 6px;
    border-radius: 8px;
    background: #fdeadb;
    color: #d27a2a;
    font-size: 9px;
    line-height: 14px;
  }

  .line p {
    font-size: 14px;
    line-height: 22px;
    color: #2b2f36;
  }

  .line.system p {
    font-family: var(--mono);
    font-size: 15px;
    color: #d88a45;
  }

  .middle {
    display: flex;
    flex-direction: column;
    gap: 15px;
    min-width: 0;
  }

  .audio {
    height: 292px;
    flex-shrink: 0;
  }

  .volume {
    display: flex;
    align-items: center;
    gap: 8px;
    margin-left: auto;
    font-family: var(--mono);
    font-size: 10px;
    color: #6b727c;
  }

  .meter {
    width: 64px;
    height: 6px;
    border-radius: 3px;
    overflow: hidden;
    background: #e3e6e9;
  }

  .meter-fill {
    height: 100%;
    border-radius: 3px;
    background: #3570e4;
  }

  .percent {
    width: 32px;
    text-align: right;
    color: #4c7785;
  }

  .wave {
    flex: 1;
    display: flex;
    align-items: center;
    gap: 2px;
    padding: 0 9px;
  }

  .wave span {
    flex: 1;
    background: linear-gradient(#a8b1ef, #b6c4f4 50%, #c6d3f9);
  }

  .protocols {
    flex: 1;
  }

  .protocols .panel-head {
    color: var(--orange);
  }

  .pill {
    margin-left: auto;
    padding: 0 6px;
    border-radius: 8px;
    background: #e8242a;
    color: #fff;
    font-family: var(--mono);
    font-size: 10px;
    line-height: 16px;
    font-weight: 700;
  }

  .protocols-body {
    padding: 13px 12px;
  }

  .protocols-body h3 {
    font-family: var(--mono);
    font-size: 10px;
    line-height: 12px;
    font-weight: 400;
    color: var(--muted);
  }

  .summary {
    display: flex;
    gap: 8px;
    padding: 8px 4px 8px 12px;
    border: 1px solid #eef1f4;
    border-radius: 10px;
    background: #f7f8fa;
  }

  .summary .icon {
    margin-top: 1px;
    color: var(--teal);
  }

  .summary p {
    margin-top: 1px;
    font-size: 11px;
    line-height: 17px;
    color: #3c424b;
  }

  .protocols-body .active-title {
    display: flex;
    align-items: center;
    gap: 6px;
    margin: 12px 0 9px;
    color: #d27a2a;
  }

  .protocol {
    box-sizing: border-box;
    display: flex;
    align-items: flex-start;
    gap: 8px;
    width: 100%;
    padding: 9px 10px 8px;
    border: 1px solid #eeb3ba;
    border-radius: 10px;
    background: #fce8e9;
    text-align: left;
    color: #e2a3ab;
  }

  .round {
    flex-shrink: 0;
    display: flex;
    align-items: center;
    justify-content: center;
    width: 22px;
    height: 22px;
    border-radius: 50%;
    background: #f8d3d6;
    color: #da4650;
  }

  .protocol-text {
    flex: 1;
    display: flex;
    flex-direction: column;
  }

  .protocol-name {
    display: flex;
    align-items: center;
    gap: 8px;
    font-size: 11px;
    line-height: 18px;
    font-weight: 600;
    color: #dc5d6b;
  }

  .protocol-name em {
    padding: 0 6px;
    border: 1px solid #f09ba1;
    border-radius: 4px;
    background: #fbc5c8;
    font-family: var(--mono);
    font-size: 9px;
    line-height: 17px;
    font-style: normal;
    font-weight: 700;
    color: #e0636d;
  }

  .protocol-note {
    font-size: 10px;
    line-height: 20px;
    color: #8e7a8c;
  }

  .protocol .round {
    margin-top: 2px;
    background: #fad9db;
    color: #e0707a;
  }

  .location .panel-head > .icon {
    color: #c4323b;
  }

  .map {
    position: relative;
    flex: 1;
    min-height: 0;
    margin: 8px;
    border-radius: 12px;
    overflow: hidden;
    background: #dceacf;
  }

  .tiles {
    position: absolute;
    width: 100%;
    height: 100%;
  }

  .tiles path {
    vector-effect: non-scaling-stroke;
    stroke-linejoin: round;
  }

  .lot {
    fill: #f3ece6;
  }

  .block {
    fill: #f9f5f0;
    stroke: #f9f5f0;
    stroke-width: 3;
  }

  .park {
    fill: #dceacf;
    stroke: #dceacf;
    stroke-width: 2;
  }

  .water {
    fill: none;
    stroke: #b5dcdb;
    stroke-width: 1;
  }

  .lane {
    fill: none;
    stroke: #f7f4e2;
    stroke-width: 2;
  }

  .road-edge {
    fill: none;
    stroke: #f3e6cd;
    stroke-width: 4;
    stroke-linecap: round;
  }

  .road {
    fill: none;
    stroke: #fffdf4;
    stroke-width: 2;
    stroke-linecap: round;
  }

  .road-edge.avenue {
    stroke-width: 6;
  }

  .road.avenue {
    stroke-width: 4;
  }

  .main {
    fill: none;
    stroke: #fdf0a4;
    stroke-width: 6;
  }

  .trunk {
    fill: none;
    stroke: #fcd27a;
    stroke-width: 6;
  }

  .rail {
    fill: none;
    stroke: #eef0ee;
    stroke-width: 3;
  }

  .rail.ties {
    stroke: #c6cbd0;
    stroke-width: 2;
    stroke-dasharray: 6 5;
  }

  .street-names text {
    font-family: 'Open Sans', sans-serif;
    font-size: 12px;
    font-weight: 600;
    fill: #66686a;
    stroke: #fbf6e6aa;
    stroke-width: 2px;
    paint-order: stroke;
  }

  .street-names .small {
    font-size: 10px;
  }

  .town {
    font-family: 'Open Sans', sans-serif;
    font-size: 14px;
    font-weight: 700;
    fill: #2c4263;
  }

  .zone {
    fill: none;
    stroke: #d84a52;
    stroke-width: 2;
    stroke-dasharray: 10 5;
  }

  .pulse {
    fill: #dc262640;
  }

  .spot {
    fill: #d81f26;
    stroke: #fff;
    stroke-width: 2;
  }

  address {
    position: absolute;
    left: 12px;
    right: 12px;
    bottom: 12px;
    padding: 11px 12px 12px;
    border: 1px solid #eceeef;
    border-radius: 10px;
    background: #f3f4f4f2;
    font-family: var(--mono);
    font-style: normal;
  }

  .address-row {
    display: flex;
    align-items: center;
    gap: 8px;
    font-size: 14px;
    line-height: 20px;
    color: #1c2028;
  }

  .coords {
    display: flex;
    align-items: center;
    gap: 4px;
    margin-top: 8px;
    font-size: 10px;
    line-height: 14px;
    color: #6f7680;
  }

  .coords .icon {
    color: var(--teal);
  }

  .sector {
    margin-left: 12px;
    color: #d27a2a;
  }

  footer {
    height: 8px;
    background: #fdfdfe;
    box-shadow: 0 -1px 2px #e2e7ee;
  }

  .cursor {
    position: absolute;
    left: 1048px;
    top: calc(100% - 9px);
  }
</style>
